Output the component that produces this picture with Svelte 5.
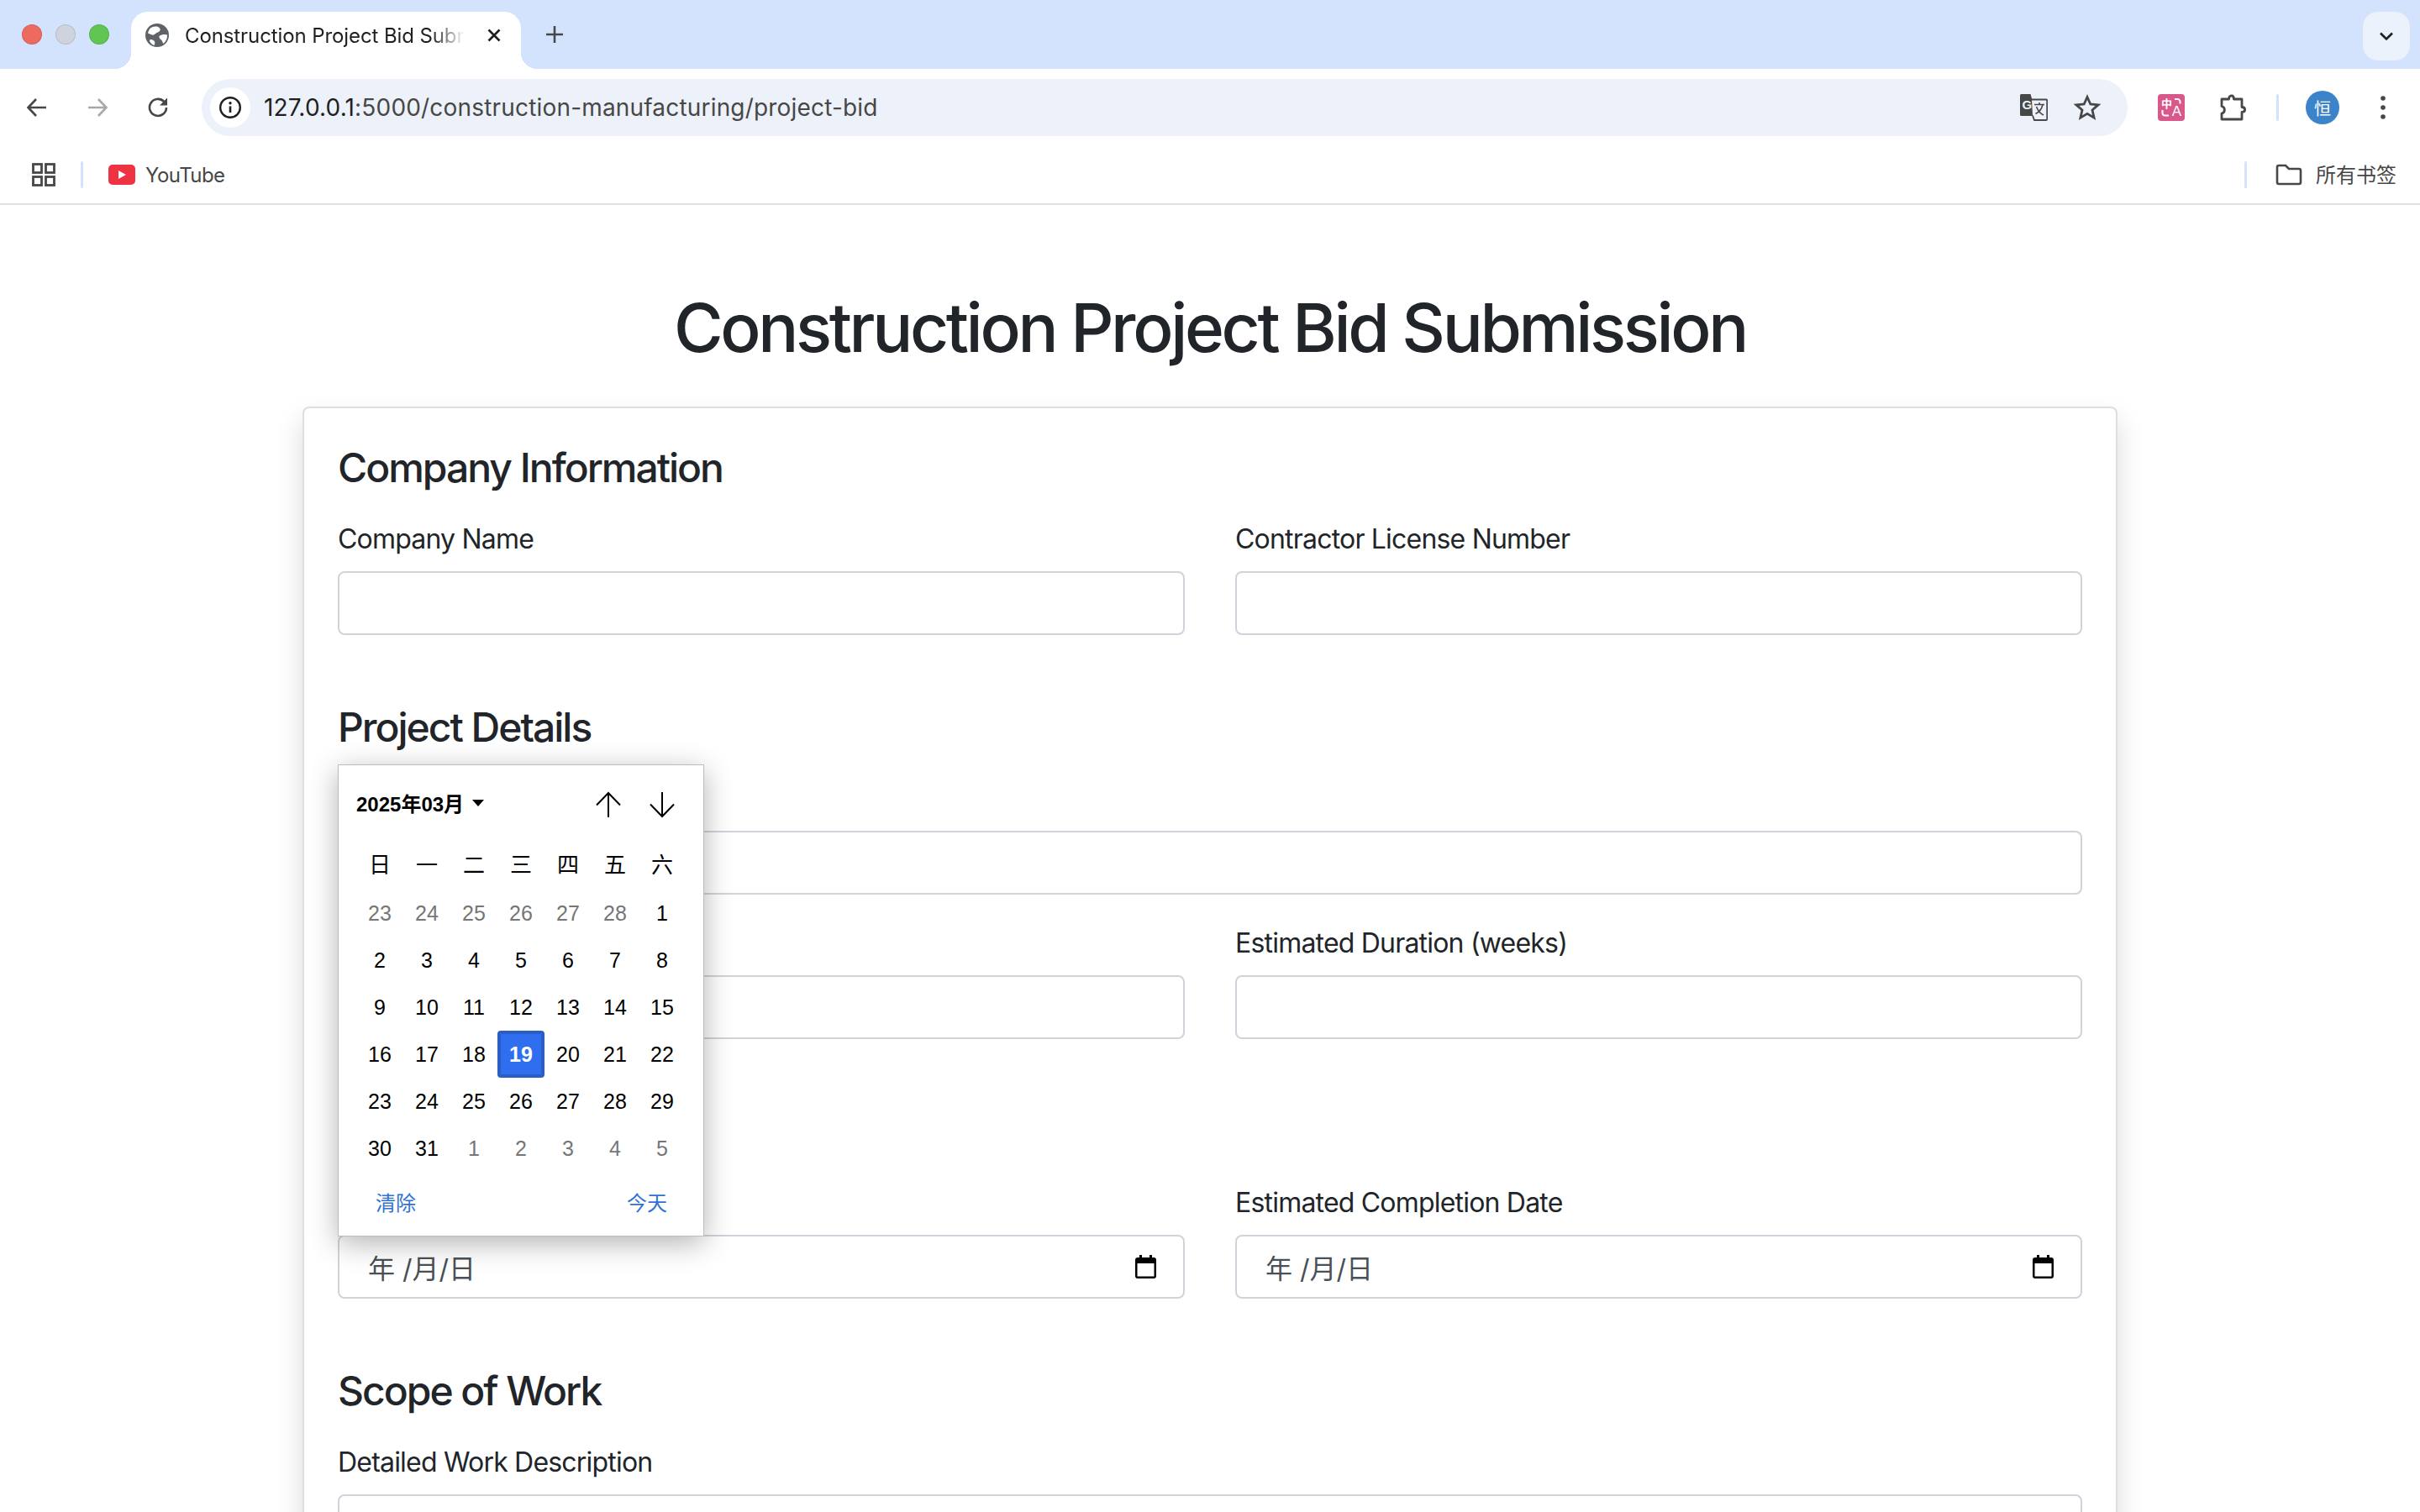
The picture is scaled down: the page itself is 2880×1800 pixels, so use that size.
<script>
  const weekdays = ['日', '一', '二', '三', '四', '五', '六'];
  // leading and trailing days belong to the neighbouring months
  const leading = [23, 24, 25, 26, 27, 28];
  const trailing = [1, 2, 3, 4, 5];
  const days = [
    ...leading.map((d) => ({ d, muted: true })),
    ...Array.from({ length: 31 }, (_, i) => ({ d: i + 1, muted: false })),
    ...trailing.map((d) => ({ d, muted: true }))
  ];
  const selectedDay = 19;
</script>

<div class="browser">
  <div class="tabstrip">
    <div class="lights">
      <span class="light red"></span>
      <span class="light grey"></span>
      <span class="light green"></span>
    </div>
    <div class="tab">
      <svg class="favicon" viewBox="0 0 28 28" width="28" height="28">
        <circle cx="14" cy="14" r="14" fill="#5f6368" />
        <path d="M5 6.500C8 3.500 12 3 15 4c2.500 1 3.500 3 2 5-1.500 1.800-3.500 1.500-5 3-1.200 1.200-2.500 2-4 1.500-2-.6-3.500-1.500-5-2 .4-2 1.500-3.800 2-5z" fill="#fff" />
        <path d="M17 14.500c2.500-1.500 6-2 9-1 .300 4-1.500 8-4.500 10.500-1.500-1.500-1-3.500-2.500-4.500-1.800-1.200-3.500-3.500-2-5z" fill="#fff" />
        <path d="M6 19c1.800-.3 4 .8 5 2.500.6 1.300.2 3-.5 4.500-2.500-.8-4.500-2.800-5.500-5 .2-1 .2-1.900 1-2z" fill="#fff" />
      </svg>
      <span class="tab-title">Construction Project Bid Submission</span>
      <svg class="tab-close" viewBox="0 0 20 20" width="20" height="20">
        <path d="M3.500 3.500l13 13M16.500 3.500l-13 13" stroke="#1f1f1f" stroke-width="2.600" fill="none" />
      </svg>
    </div>
    <svg class="newtab" viewBox="0 0 24 24" width="24" height="24">
      <path d="M12 2v20M2 12h20" stroke="#474747" stroke-width="2.600" fill="none" />
    </svg>
    <div class="tabsearch">
      <svg viewBox="0 0 20 20" width="20" height="20">
        <path d="M3 6.500l7 7 7-7" stroke="#1f1f1f" stroke-width="2.600" fill="none" />
      </svg>
    </div>
  </div>

  <div class="toolbar">
    <div class="navs">
      <svg viewBox="0 0 28 28" width="28" height="28">
        <path d="M25 14H4M13 4L3.500 14 13 24" stroke="#474747" stroke-width="2.600" fill="none" />
      </svg>
      <svg viewBox="0 0 28 28" width="28" height="28">
        <path d="M3 14h21M15 4l9.500 10L15 24" stroke="#a8a8a8" stroke-width="2.600" fill="none" />
      </svg>
      <svg viewBox="0 0 28 28" width="28" height="28">
        <path d="M24 14a10 10 0 1 1-3-7.200l3 2.800" stroke="#474747" stroke-width="2.600" fill="none" />
        <path d="M25 2.500v9h-9z" fill="#474747" />
      </svg>
    </div>
    <div class="omnibox">
      <div class="site-info">
        <svg viewBox="0 0 28 28" width="28" height="28">
          <circle cx="14" cy="14" r="11.800" stroke="#1f1f1f" stroke-width="2.400" fill="none" />
          <path d="M14 12.500V20" stroke="#1f1f1f" stroke-width="2.600" />
          <circle cx="14" cy="8.800" r="1.700" fill="#1f1f1f" />
        </svg>
      </div>
      <div class="url"><span class="host">127.0.0.1</span>:5000/construction-manufacturing/project-bid</div>
      <svg class="gt" viewBox="0 0 33 32" width="33" height="32">
        <path d="M1.500 0h11l7.500 26H1.500A1.500 1.500 0 0 1 0 24.500v-23A1.500 1.500 0 0 1 1.500 0z" fill="#474747" />
        <path d="M14 6.500h17a1.200 1.200 0 0 1 1.200 1.200v22.100a1.200 1.200 0 0 1-1.200 1.200H17l-2-5.500" fill="#edf2fa" stroke="#474747" stroke-width="1.800" />
        <text x="2.500" y="18" class="gt-g">G</text>
        <path d="M17 12.500h12M23 10v2.500M27 12.500c-1 5-4.500 9-8.500 11M19.500 15c1.500 4 4.500 8 8.500 10" stroke="#474747" stroke-width="1.600" fill="none" />
      </svg>
      <svg class="star" viewBox="0 0 32 32" width="32" height="32">
        <path d="M16 3.500l3.800 8.500 9.200.9-7 6.100 2.100 9.100-8.100-4.800-8.100 4.800 2.100-9.100-7-6.100 9.200-.9z" stroke="#474747" stroke-width="2.800" fill="none" stroke-linejoin="miter" />
      </svg>
    </div>
    <div class="actions">
      <div class="ext-pink">
        <span class="ext-zh">中</span>
        <span class="ext-a">A</span>
        <svg viewBox="0 0 32 32" width="32" height="32">
          <path d="M20 6h3.500a3 3 0 0 1 3 3v2.500M5.500 19v3.500a3 3 0 0 0 3 3H13" stroke="#fff" stroke-width="2" fill="none" />
        </svg>
      </div>
      <svg class="puzzle" viewBox="0 0 32 32" width="32" height="32">
        <path d="M2 6h8.500c0-5.500 6-5.500 6 0H26v9.500c4.800 0 4.800 6 0 6V30H2v-7c4.500-1 4.500-7.500 0-8.500z" stroke="#474747" stroke-width="2.800" fill="none" stroke-linejoin="round" />
      </svg>
      <span class="sep"></span>
      <div class="avatar">恒</div>
      <svg class="dots" viewBox="0 0 8 32" width="8" height="32">
        <circle cx="4" cy="5" r="2.800" fill="#474747" />
        <circle cx="4" cy="16" r="2.800" fill="#474747" />
        <circle cx="4" cy="27" r="2.800" fill="#474747" />
      </svg>
    </div>
  </div>

  <div class="bookmarks">
    <svg class="apps" viewBox="0 0 28 28" width="28" height="28">
      <g stroke="#474747" stroke-width="2.800" fill="none">
        <rect x="1.500" y="1.500" width="10" height="10" />
        <rect x="16.500" y="1.500" width="10" height="10" />
        <rect x="1.500" y="16.500" width="10" height="10" />
        <rect x="16.500" y="16.500" width="10" height="10" />
      </g>
    </svg>
    <span class="sep"></span>
    <div class="bookmark">
      <svg viewBox="0 0 32 24" width="32" height="24">
        <rect width="32" height="24" rx="5" fill="#ee3342" />
        <path d="M12 7l9 5-9 5z" fill="#fff" />
      </svg>
      <span>YouTube</span>
    </div>
    <span class="sep push"></span>
    <div class="bookmark all">
      <svg viewBox="0 0 32 26" width="32" height="26">
        <path d="M2 4a2 2 0 0 1 2-2h8l4 4h12a2 2 0 0 1 2 2v14a2 2 0 0 1-2 2H4a2 2 0 0 1-2-2z" stroke="#474747" stroke-width="2.600" fill="none" />
      </svg>
      <span class="all-label">所有书签</span>
    </div>
  </div>
</div>

<main class="page">
  <h1>Construction Project Bid Submission</h1>
  <form class="card">
    <section>
      <h2>Company Information</h2>
      <div class="row">
        <div class="field">
          <label for="company">Company Name</label>
          <input id="company" type="text" />
        </div>
        <div class="field">
          <label for="license">Contractor License Number</label>
          <input id="license" type="text" />
        </div>
      </div>
    </section>

    <section>
      <h2>Project Details</h2>
      <div class="field wide">
        <label for="project">Project Name</label>
        <input id="project" type="text" />
      </div>
      <div class="row">
        <div class="field">
          <label for="amount">Bid Amount ($)</label>
          <input id="amount" type="text" />
        </div>
        <div class="field">
          <label for="duration">Estimated Duration (weeks)</label>
          <input id="duration" type="text" />
        </div>
      </div>
    </section>

    <section>
      <h2>Timeline</h2>
      <div class="row">
        <div class="field">
          <label for="start">Proposed Start Date</label>
          <div id="start" class="dateinput">
            <span>年 /月/日</span>
            <svg viewBox="0 0 25 28" width="25" height="28">
              <path fill-rule="evenodd" d="M5 0h3v3h9V0h3v3h2a3 3 0 0 1 3 3v19a3 3 0 0 1-3 3H3a3 3 0 0 1-3-3V6a3 3 0 0 1 3-3h2zM2.500 10v15.500h20V10z" fill="#000" />
            </svg>
          </div>
        </div>
        <div class="field">
          <label for="finish">Estimated Completion Date</label>
          <div id="finish" class="dateinput">
            <span>年 /月/日</span>
            <svg viewBox="0 0 25 28" width="25" height="28">
              <path fill-rule="evenodd" d="M5 0h3v3h9V0h3v3h2a3 3 0 0 1 3 3v19a3 3 0 0 1-3 3H3a3 3 0 0 1-3-3V6a3 3 0 0 1 3-3h2zM2.500 10v15.500h20V10z" fill="#000" />
            </svg>
          </div>
        </div>
      </div>
    </section>

    <section>
      <h2>Scope of Work</h2>
      <div class="field wide">
        <label for="scope">Detailed Work Description</label>
        <textarea id="scope" rows="4"></textarea>
      </div>
    </section>

    <!-- open date picker, floats over the form -->
    <div class="picker">
      <div class="picker-head">
        <div class="month">2025年03月<span class="caret"></span></div>
        <div class="arrows">
          <svg viewBox="0 0 32 32" width="32" height="32">
            <path d="M16 31V2M2 16.500L16 2l14 14.500" stroke="#000" stroke-width="2" fill="none" />
          </svg>
          <svg viewBox="0 0 32 32" width="32" height="32">
            <path d="M16 1v29M2 15.500L16 30l14-14.500" stroke="#000" stroke-width="2" fill="none" />
          </svg>
        </div>
      </div>
      <div class="grid">
        {#each weekdays as w}
          <div class="weekday">{w}</div>
        {/each}
        {#each days as day}
          <div class="day" class:muted={day.muted} class:selected={!day.muted && day.d === selectedDay}>{day.d}</div>
        {/each}
      </div>
      <div class="picker-foot">
        <span>清除</span>
        <span>今天</span>
      </div>
    </div>
  </form>
</main>

<style>
  :global(body) {
    margin: 0;
    background: #fff;
    overflow: hidden;
    font-family: Inter, "Noto Sans CJK SC", sans-serif;
    color: #212529;
  }

  .browser {
    height: 244px;
    box-sizing: border-box;
    border-bottom: 2px solid #e0e0e0;
  }

  .tabstrip {
    height: 82px;
    background: #d3e3fd;
    display: flex;
    align-items: flex-end;
    position: relative;
  }

  .lights {
    display: flex;
    gap: 16px;
    padding-left: 26px;
    width: 130px;
    box-sizing: border-box;
    align-self: center;
  }

  .light {
    width: 24px;
    height: 24px;
    border-radius: 50%;
    box-sizing: border-box;
    border: 1px solid rgba(0, 0, 0, 0.1);
  }
  .red { background: #ed6a5e; }
  .grey { background: #ced3dd; }
  .green { background: #61c554; }

  .tab {
    margin-left: 26px;
    width: 464px;
    height: 68px;
    background: #fff;
    border-radius: 20px 20px 0 0;
    display: flex;
    align-items: center;
    padding: 0 22px 12px 17px;
    box-sizing: border-box;
    position: relative;
  }

  .tab::before,
  .tab::after {
    content: "";
    position: absolute;
    bottom: 0;
    width: 20px;
    height: 20px;
  }
  .tab::before {
    left: -20px;
    background: radial-gradient(circle at 0 0, #d3e3fd 20px, #fff 20.500px);
  }
  .tab::after {
    right: -20px;
    background: radial-gradient(circle at 100% 0, #d3e3fd 20px, #fff 20.500px);
  }

  .favicon { flex: none; }

  .tab-title {
    margin-left: 19px;
    width: 333px;
    flex: none;
    overflow: hidden;
    white-space: nowrap;
    font-size: 24px;
    letter-spacing: -0.100px;
    color: #1f1f1f;
    -webkit-mask-image: linear-gradient(90deg, #000 88%, transparent 100%);
    mask-image: linear-gradient(90deg, #000 88%, transparent 100%);
  }

  .tab-close { margin-left: 25px; flex: none; }

  .newtab {
    align-self: center;
    margin-left: 28px;
  }

  .tabsearch {
    position: absolute;
    right: 12px;
    top: 14px;
    width: 56px;
    height: 58px;
    border-radius: 18px;
    background: #ebf2fc;
    display: flex;
    align-items: center;
    justify-content: center;
  }

  .toolbar {
    height: 92px;
    background: #fff;
    display: flex;
    align-items: center;
    border-radius: 16px 16px 0 0;
    position: relative;
  }

  .navs {
    display: flex;
    gap: 44px;
    padding-left: 30px;
    width: 240px;
    box-sizing: border-box;
  }

  .omnibox {
    flex: none;
    width: 2292px;
    height: 68px;
    border-radius: 34px;
    background: #edf2fa;
    display: flex;
    align-items: center;
    box-sizing: border-box;
    padding: 0 32px 0 10px;
  }

  .site-info {
    width: 48px;
    height: 48px;
    border-radius: 50%;
    background: #fff;
    display: flex;
    align-items: center;
    justify-content: center;
    flex: none;
  }

  .url {
    margin-left: 16px;
    font-size: 28px;
    letter-spacing: 0.180px;
    color: #474747;
    flex: 1;
    white-space: nowrap;
  }
  .host { color: #1f1f1f; }

  .gt-g {
    font-family: "Liberation Sans", sans-serif;
    font-size: 15px;
    font-weight: 700;
    fill: #edf2fa;
  }

  .star { margin-left: 31px; }

  .actions {
    flex: 1;
    display: flex;
    align-items: center;
    padding-left: 36px;
  }

  .ext-pink {
    width: 32px;
    height: 32px;
    border-radius: 4px;
    background: #d9578a;
    position: relative;
    color: #fff;
    overflow: hidden;
    flex: none;
  }
  .ext-pink svg {
    position: absolute;
    left: 0;
    top: 0;
  }
  .ext-zh {
    position: absolute;
    left: 4px;
    top: 3px;
    font-size: 13px;
    font-weight: 700;
    line-height: 16px;
  }
  .ext-a {
    position: absolute;
    right: 4px;
    bottom: 3px;
    font-size: 17px;
    font-weight: 400;
    line-height: 17px;
    font-family: "Liberation Sans", sans-serif;
  }

  .puzzle { margin-left: 42px; }

  .sep {
    display: block;
    width: 3px;
    height: 32px;
    border-radius: 2px;
    background: #d3e3fd;
    flex: none;
  }
  .actions .sep { margin-left: 35px; }

  .avatar {
    margin-left: 32px;
    width: 40px;
    height: 40px;
    border-radius: 50%;
    background: #3b84c9;
    color: #fff;
    font-size: 20px;
    display: flex;
    align-items: center;
    justify-content: center;
  }

  .dots { margin-left: 48px; }

  .bookmarks {
    height: 68px;
    background: #fff;
    display: flex;
    align-items: center;
    padding-left: 38px;
    padding-right: 28px;
  }

  .bookmarks .sep { margin-left: 30px; }

  .bookmark {
    display: flex;
    align-items: center;
    gap: 12px;
    font-size: 24px;
    letter-spacing: -0.550px;
    color: #474747;
    margin-left: 30px;
  }

  .bookmarks .push { margin-left: auto; }

  .all { gap: 16px; margin-left: 34px; letter-spacing: 0; }
  .all-label { margin-top: -3px; }

  .page {
    position: relative;
    width: 2160px;
    margin: 0 auto;
    padding-top: 98px;
  }

  h1 {
    margin: 0 0 46px;
    font-size: 80px;
    line-height: 96px;
    font-weight: 500;
    text-align: center;
    letter-spacing: -3.350px;
  }

  .card {
    position: relative;
    border: 2px solid rgba(0, 0, 0, 0.125);
    border-radius: 8px;
    padding: 40px;
    background: #fff;
    box-shadow: 0 16px 32px rgba(0, 0, 0, 0.15);
  }

  section { margin-bottom: 79px; }

  h2 {
    margin: 0 0 30px;
    padding-top: 2px;
    font-size: 48px;
    line-height: 58px;
    font-weight: 500;
    letter-spacing: -2px;
  }

  .row {
    display: grid;
    grid-template-columns: 1fr 1fr;
    gap: 60px;
  }

  .wide { margin-bottom: 32px; }

  .field label {
    display: block;
    font-size: 32px;
    line-height: 48px;
    letter-spacing: -0.800px;
    padding-top: 2px;
    margin-bottom: 14px;
  }

  input,
  textarea,
  .dateinput {
    display: block;
    width: 100%;
    box-sizing: border-box;
    height: 76px;
    border: 2px solid #ced4da;
    border-radius: 8px;
    background: #fff;
    outline: none;
  }

  textarea { height: 240px; }

  .dateinput {
    display: flex;
    align-items: center;
    justify-content: space-between;
    padding: 0 32px 0 34px;
    font-size: 32px;
    color: #495057;
  }

  .picker {
    position: absolute;
    left: 40px;
    top: 424px;
    width: 436px;
    height: 562px;
    box-sizing: border-box;
    border: 1px solid #bdbdbd;
    background: #fff;
    box-shadow: 0 8px 32px rgba(0, 0, 0, 0.3);
    font-family: "Liberation Sans", "Noto Sans CJK SC", sans-serif;
    color: #000;
  }

  .picker-head {
    height: 92px;
    display: flex;
    align-items: center;
    justify-content: space-between;
    padding: 0 33px 0 21px;
  }

  .month {
    font-size: 24px;
    font-weight: 700;
    display: flex;
    align-items: center;
    margin-top: -3px;
  }

  .caret {
    margin-left: 10px;
    border-left: 7px solid transparent;
    border-right: 7px solid transparent;
    border-top: 8px solid #000;
  }

  .arrows {
    display: flex;
    gap: 32px;
    margin-top: 2px;
  }

  .grid {
    display: grid;
    grid-template-columns: repeat(7, 56px);
    grid-auto-rows: 56px;
    padding-left: 21px;
  }

  .weekday,
  .day {
    display: flex;
    align-items: center;
    justify-content: center;
    font-size: 25px;
    box-sizing: border-box;
  }

  .weekday {
    font-size: 26px;
    padding-bottom: 7px;
  }

  .day { color: #000; }
  .muted { color: #767676; }

  .selected {
    background: #2f6fef;
    border: 4px solid #2a5ec4;
    border-radius: 4px;
    color: #fff;
    font-weight: 700;
  }

  .picker-foot {
    display: flex;
    justify-content: space-between;
    padding: 18px 43px 0 44px;
    font-size: 24px;
    color: #2e72d2;
  }
</style>
